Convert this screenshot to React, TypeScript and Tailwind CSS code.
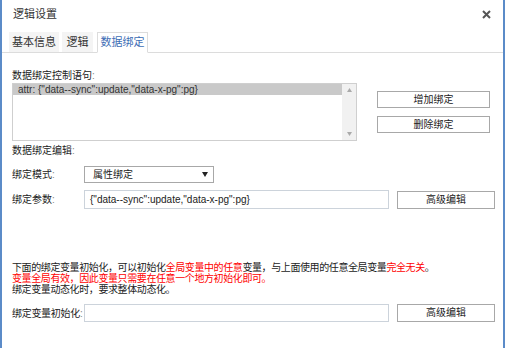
export default function App() {
  return (
    <div
      className="h-[348px] w-full overflow-hidden border-x-2 border-[#5b8bc8] bg-white text-[10px] text-[#222]"
      style={{ fontFamily: '"Liberation Sans", "Noto Sans CJK SC", sans-serif' }}
    >
      {/* header */}
      <div className="flex h-[28px] items-center justify-between pl-[11px] pr-[12px]">
        <span className="text-[11px] text-[#333]">逻辑设置</span>
        <svg width="9" height="9" viewBox="0 0 9 9">
          <path d="M1 1L8 8M8 1L1 8" stroke="#555" strokeWidth="2" />
        </svg>
      </div>

      {/* tabs */}
      <div className="mt-[4px] flex h-[21px] items-end gap-[3px] border-b border-[#dcdcdc] pl-[7px]">
        <div className="flex h-[20px] w-[50px] items-center justify-center bg-[#f4f4f4] text-[11px] text-[#333]">基本信息</div>
        <div className="flex h-[20px] w-[31px] items-center justify-center bg-[#f4f4f4] text-[11px] text-[#333]">逻辑</div>
        <div className="-mb-px ml-[1px] flex h-[21px] w-[51px] items-center justify-center border border-b-white border-[#dcdcdc] bg-white text-[11px] text-[#3d6db5]">数据绑定</div>
      </div>

      {/* content */}
      <div className="pl-[10px] pt-[17px]">
        <div className="leading-[12px]">数据绑定控制语句<span className="text-[#888]">:</span></div>

        <div className="mt-[1px] flex">
          <div className="flex h-[58px] w-[345px] border border-[#cfcfcf]">
            <div className="flex-1">
              <div className="h-[11px] bg-[#c9c9c9] pl-[5px] leading-[11px] text-[#333]">
                attr: {'{'}"data--sync":update,"data-x-pg":pg{'}'}
              </div>
            </div>
            <div className="flex w-[14px] flex-col items-center justify-between bg-[#f1f1f1] py-[4px]">
              <svg width="5" height="4" viewBox="0 0 5 4"><path d="M2.5 0L5 4H0Z" fill="#aaa" /></svg>
              <svg width="5" height="4" viewBox="0 0 5 4"><path d="M0 0H5L2.5 4Z" fill="#aaa" /></svg>
            </div>
          </div>
          <div className="ml-[20px] mt-[8px] flex w-[113px] flex-col gap-[8px]">
            <button className="h-[17px] border border-[#a8a8a8] bg-white text-[10px] leading-[15px] text-[#222]">增加绑定</button>
            <button className="h-[17px] border border-[#a8a8a8] bg-white text-[10px] leading-[15px] text-[#222]">删除绑定</button>
          </div>
        </div>

        <div className="mt-[4px] leading-[12px]">数据绑定编辑<span className="text-[#888]">:</span></div>

        <div className="mt-[9px] flex items-center">
          <div className="w-[72px] shrink-0 whitespace-nowrap">绑定模式<span className="text-[#888]">:</span></div>
          <div className="flex h-[17px] w-[130px] items-center justify-between border border-[#a8a8a8] pl-[8px] pr-[5px]">
            <span>属性绑定</span>
            <svg width="6" height="5" viewBox="0 0 6 5"><path d="M0 0H6L3 5Z" fill="#222" /></svg>
          </div>
        </div>

        <div className="mt-[7px] flex items-center">
          <div className="w-[72px] shrink-0 whitespace-nowrap">绑定参数<span className="text-[#888]">:</span></div>
          <div className="flex h-[19px] w-[305px] items-center border border-[#ccd3db] pl-[5px]">
            {'{'}"data--sync":update,"data-x-pg":pg{'}'}
          </div>
          <button className="ml-[8px] h-[18px] w-[98px] border border-[#a8a8a8] bg-white text-[10px] leading-[16px] text-[#222]">高级编辑</button>
        </div>

        <div className="mt-[53px] leading-[11px] tracking-[-0.4px]">
          <div>
            下面的绑定变量初始化，可以初始化<span className="text-[#f00]">全局变量中的任意</span>变量，与上面使用的任意全局变量<span className="text-[#f00]">完全无关</span>。
          </div>
          <div className="text-[#f00]">变量全局有效，因此变量只需要在任意一个地方初始化即可。</div>
          <div>绑定变量动态化时，要求整体动态化。</div>
        </div>

        <div className="mt-[9px] flex items-center">
          <div className="w-[72px] shrink-0 whitespace-nowrap tracking-[-0.3px]">绑定变量初始化<span className="text-[#888]">:</span></div>
          <div className="h-[18px] w-[305px] border border-[#ccd3db]" />
          <button className="ml-[8px] h-[18px] w-[98px] border border-[#a8a8a8] bg-white text-[10px] leading-[16px] text-[#222]">高级编辑</button>
        </div>
      </div>
    </div>
  )
}
